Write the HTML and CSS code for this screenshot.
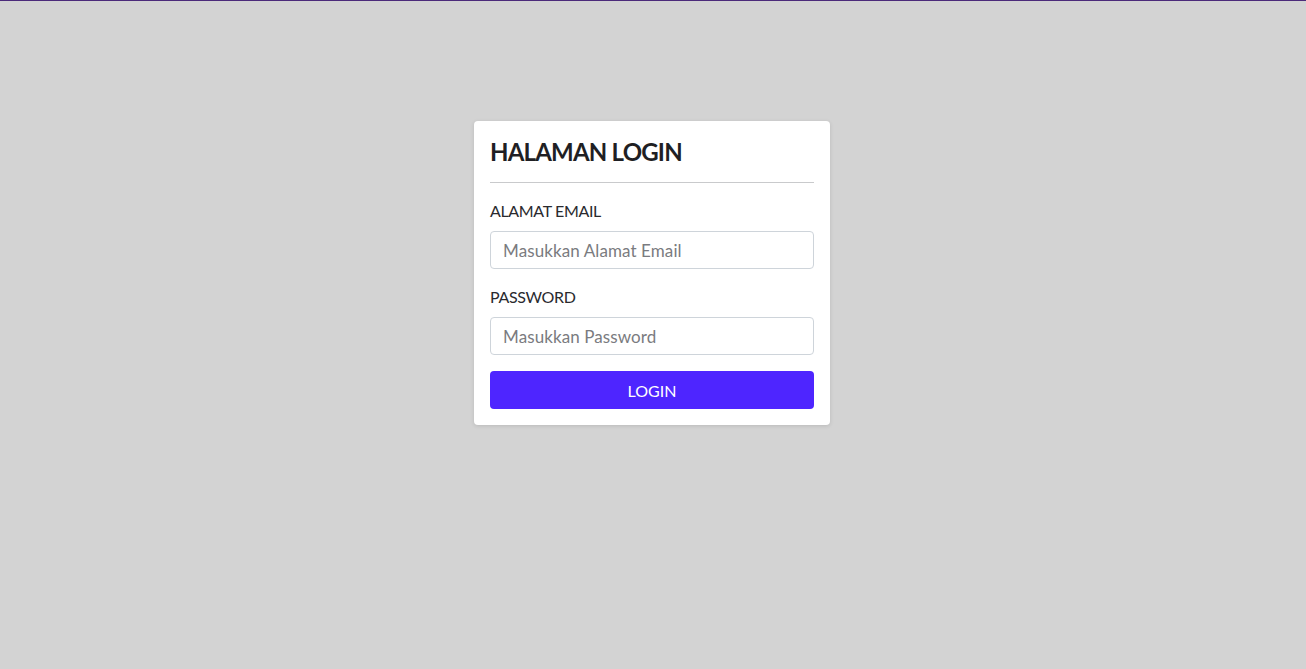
FILE: index.html
```html
<!DOCTYPE html>
<html lang="id">
<head>
<meta charset="utf-8">
<title>Halaman Login</title>
<link rel="stylesheet" href="styles.css">
</head>
<body>
<main class="page">
  <form class="card">
    <h1 class="card-title">HALAMAN LOGIN</h1>
    <hr class="divider">
    <div class="field">
      <label class="label" for="email">ALAMAT EMAIL</label>
      <input class="input" id="email" type="email" placeholder="Masukkan Alamat Email">
    </div>
    <div class="field">
      <label class="label" for="password">PASSWORD</label>
      <input class="input" id="password" type="password" placeholder="Masukkan Password">
    </div>
    <button class="btn" type="button">LOGIN</button>
  </form>
</main>
</body>
</html>
```
FILE: styles.css
```css
* { box-sizing: border-box; }
html, body { margin: 0; padding: 0; }
body {
  background: #d3d3d3;
  border-top: 1px solid #4b2a7a;
  min-height: 669px;
  font-family: "Lato", "Open Sans", sans-serif;
  color: #212529;
}
.page {
  display: flex;
  justify-content: center;
  padding-top: 120px;
}
.card {
  width: 356px;
  background: #fff;
  border-radius: 4px;
  padding: 16px;
  box-shadow: 0 1px 4px rgba(0,0,0,0.12);
  display: flex;
  flex-direction: column;
  margin-left: -2px;
}
.card-title {
  margin: 0;
  font-size: 24px;
  line-height: 29px;
  font-weight: 700;
  color: #1f1f24;
  letter-spacing: -0.8px;
}
.divider {
  margin: 16px 0 16px;
  border: 0;
  border-top: 1px solid #c9cacc;
  height: 0;
}
.field {
  display: flex;
  flex-direction: column;
  margin-bottom: 16px;
}
.label {
  font-size: 16px;
  line-height: 24px;
  margin-bottom: 8px;
  color: #2a2a2e;
  font-weight: 400;
  letter-spacing: -0.35px;
}
.input {
  height: 38px;
  border: 1px solid #ced4da;
  border-radius: 4px;
  padding: 0 12px;
  font-family: inherit;
  font-size: 17px;
  font-weight: 400;
  letter-spacing: 0.1px;
  color: #495057;
  background: #fff;
}
.input::placeholder { color: #7a7b80; }
.btn {
  height: 38px;
  border: 0;
  border-radius: 4px;
  background: #4e25ff;
  color: #fff;
  font-family: inherit;
  font-size: 16px;
  font-weight: 400;
}
```
